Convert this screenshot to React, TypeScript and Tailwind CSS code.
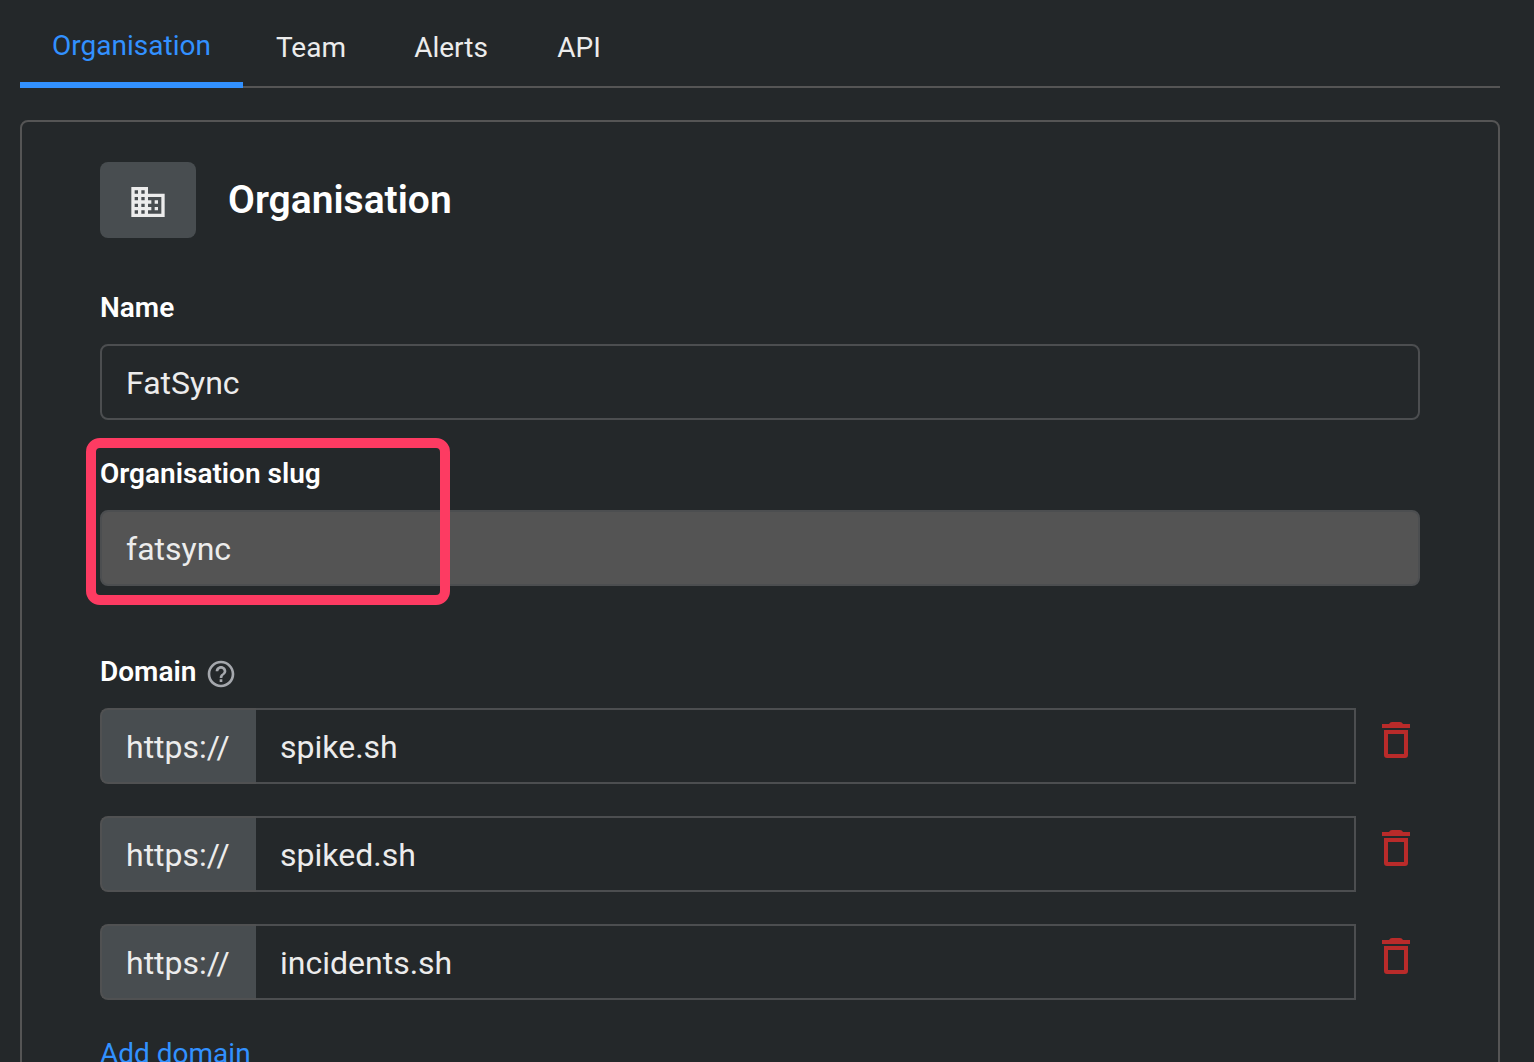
import { useState } from 'react';
import { MdBusiness, MdHelpOutline } from 'react-icons/md';

const tabs = [
  { label: 'Team', width: 'w-[136px]' },
  { label: 'Alerts', width: 'w-36' },
  { label: 'API', width: 'w-28' },
];

function TrashIcon() {
  return (
    <svg viewBox="0 0 28 36" className="h-9 w-7" fill="currentColor" aria-hidden="true">
      <path d="M0 2h7q1-2 3-2h8q2 0 3 2h7v4H0z" />
      <path fillRule="evenodd" d="M2 8h24v25a3 3 0 0 1-3 3H5a3 3 0 0 1-3-3zM6 12v20h16V12z" />
    </svg>
  );
}

function DomainRow({ initial }: { initial: string }) {
  const [value, setValue] = useState(initial);
  return (
    <div className="flex h-[76px]">
      <span className="flex w-[156px] shrink-0 items-center rounded-l-lg border-2 border-r-0 border-[#505152] bg-[#484d50] pt-[2px] pl-6 text-[32px] leading-10">
        https://
      </span>
      <input
        aria-label={`Domain ${initial}`}
        value={value}
        onChange={(e) => setValue(e.target.value)}
        className="min-w-0 flex-1 border-2 border-l-0 border-[#4c4e50] bg-transparent px-6 pt-[2px] text-[32px] leading-10 outline-none"
      />
      <button type="button" aria-label={`Delete ${initial}`} className="flex w-16 justify-end pt-[14px] pr-[10px] text-[#b92b2a]">
        <TrashIcon />
      </button>
    </div>
  );
}

export default function App() {
  const [name, setName] = useState('FatSync');
  return (
    <div className="h-screen overflow-hidden bg-[#24282a] pr-[34px] pl-5 font-['Roboto','Liberation_Sans',sans-serif] text-[#ececec]">
      <nav className="flex h-[88px] border-b-2 border-[#555555] text-[28px] leading-9">
        <a href="#organisation" aria-current="page" className="-mb-[2px] flex w-[223px] justify-center border-b-[6px] border-[#3291ff] pt-7 text-[#3291ff]">
          Organisation
        </a>
        {tabs.map((tab) => (
          <a key={tab.label} href={`#${tab.label.toLowerCase()}`} className={`flex justify-center pt-[30px] ${tab.width}`}>
            {tab.label}
          </a>
        ))}
      </nav>

      <main className="mt-8 rounded-lg border-2 border-[#555555] px-[78px] pt-10 pb-20">
        <header className="flex items-center gap-8">
          <div className="flex h-[76px] w-24 items-center justify-center rounded-lg bg-[#484d50] pt-1">
            <MdBusiness size={40} />
          </div>
          <h1 className="text-[39px] leading-[48px] font-semibold text-white">Organisation</h1>
        </header>

        <div className="mt-[52px]">
          <label htmlFor="name" className="block text-[28px] leading-9 font-semibold text-white">Name</label>
          <input
            id="name"
            value={name}
            onChange={(e) => setName(e.target.value)}
            className="mt-[18px] block h-[76px] w-full rounded-lg border-2 border-[#4c4e50] bg-transparent px-6 pt-[2px] text-[32px] leading-10 outline-none"
          />
        </div>

        <div className="relative mt-9">
          <label htmlFor="slug" className="block text-[28px] leading-9 font-semibold text-white">Organisation slug</label>
          <input
            id="slug"
            value="fatsync"
            readOnly
            className="mt-[18px] block h-[76px] w-full rounded-lg border-2 border-[#4c4e50] bg-[#545454] px-6 pt-[2px] text-[32px] leading-10 outline-none"
          />
          <div className="pointer-events-none absolute -top-[18px] -left-[14px] h-[167px] w-[364px] rounded-[14px] border-10 border-[#fd3b62]" />
        </div>

        <section className="mt-[68px]">
          <div className="flex h-9 items-center gap-[9px]">
            <h2 className="text-[28px] leading-9 font-semibold text-white">Domain</h2>
            <button type="button" aria-label="About domains" className="mt-1 text-[#a5a8ad]">
              <MdHelpOutline size={32} />
            </button>
          </div>
          <div className="mt-[18px] flex flex-col gap-8">
            <DomainRow initial="spike.sh" />
            <DomainRow initial="spiked.sh" />
            <DomainRow initial="incidents.sh" />
          </div>
          <button type="button" className="mt-9 block text-[28px] leading-9 text-[#3291ff]">Add domain</button>
        </section>
      </main>
    </div>
  );
}
